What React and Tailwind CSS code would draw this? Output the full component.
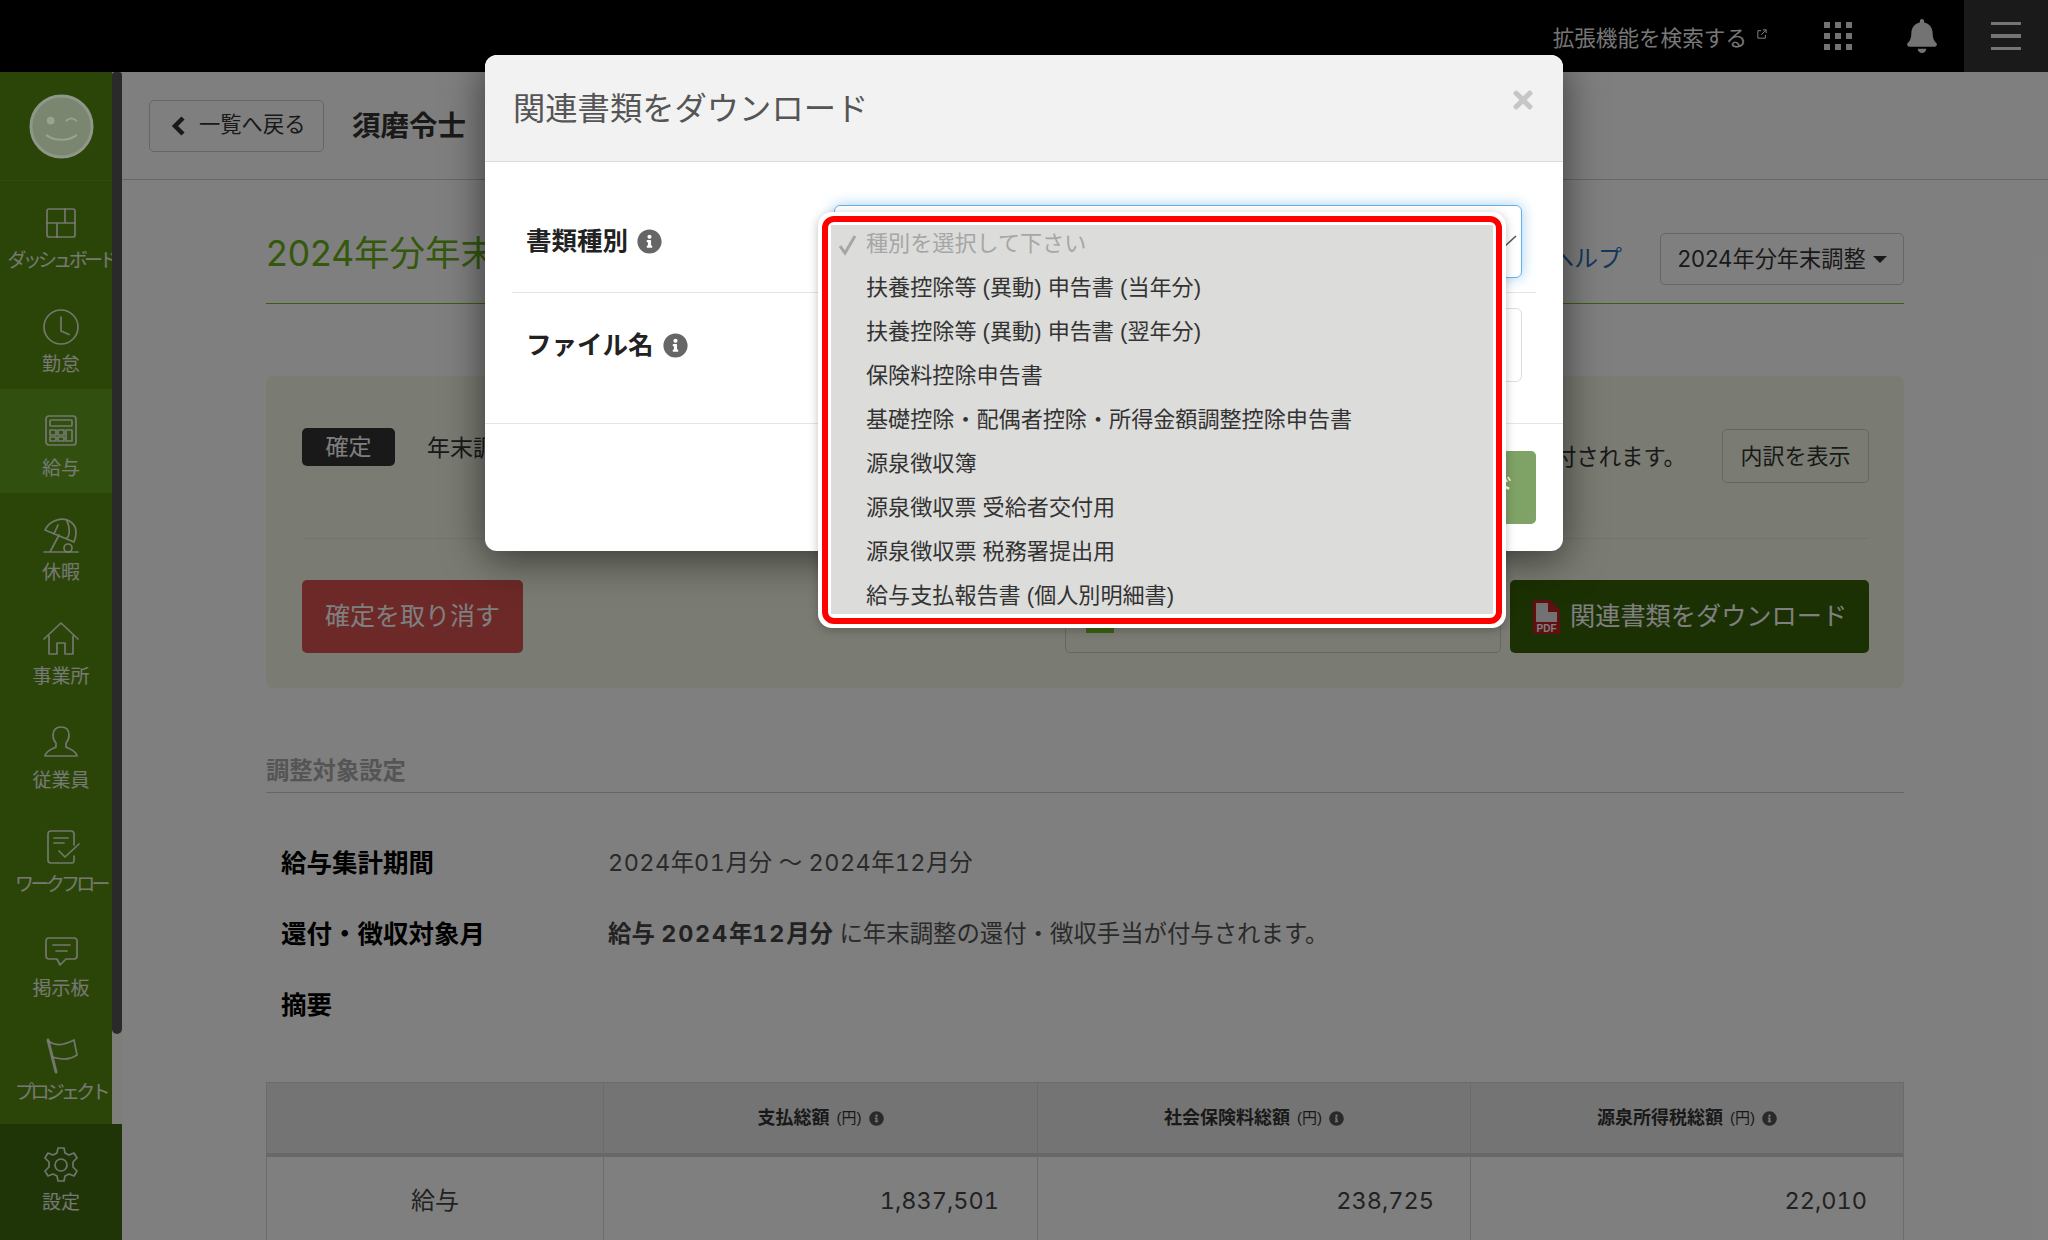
import React from "react";
import { FaInfoCircle, FaBell, FaTimes } from "react-icons/fa";

const S = { fill: "none", stroke: "currentColor", strokeWidth: 1.7, strokeLinecap: "round", strokeLinejoin: "round" };
const Ic = ({ children }) => (
  <svg viewBox="0 0 40 40" className="w-10 h-10 text-white/85" {...S}>{children}</svg>
);
const icons = {
  dash: <Ic><rect x="6" y="6" width="28" height="28" rx="2" /><path d="M6 20h28M24 6v14M16 20v14" /></Ic>,
  clock: <Ic><circle cx="20" cy="20" r="17" /><path d="M20 10v14l8 3.5" /></Ic>,
  calc: <Ic><rect x="5" y="5" width="30" height="29" rx="3" /><rect x="9" y="9" width="22" height="6" rx="1" /><rect x="9" y="19" width="6" height="5" /><rect x="17" y="19" width="6" height="5" /><rect x="25" y="19" width="6" height="11" /><rect x="9" y="26" width="6" height="4" /><rect x="17" y="26" width="6" height="4" /></Ic>,
  beach: <Ic><path d="M3 37h34M9 37 18 20M4 15C8 6 22 0 31 8c5 4 5 12 2 19L4 15ZM17 10l-4 9M26 6c3 6 3 14 0 17" /><circle cx="27" cy="33" r="4" /></Ic>,
  home: <Ic><path d="M3 20 20 4l17 16M8 17v18h8V24h8v11h8V17" /></Ic>,
  user: <Ic><path d="M15 24v-4c-2-2-3-5-3-8 0-5 3-8 8-8s8 3 8 8c0 3-1 6-3 8v4c3 2 10 3 11 9H4c1-6 8-7 11-9Z" /></Ic>,
  flow: <Ic><path d="M33 18V7c0-2-1-3-3-3H10C8 4 7 5 7 7v26c0 2 1 3 3 3h21c2 0 2-1 2-3v-4M13 11h14M13 16h10M18 24l6 6L38 17" /></Ic>,
  board: <Ic><path d="M8 7h25c2 0 3 1 3 3v15c0 2-1 3-3 3H25l-6 6-3-6H8c-2 0-3-1-3-3V10c0-2 1-3 3-3ZM12 14h17M15 20h11" /></Ic>,
  flag: <Ic><path d="M7 5 15 37" strokeWidth="3" /><path d="M7 6c8 5 14 5 26-1l3 15c-9 6-17 4-25 2" /></Ic>,
  gear: <Ic><circle cx="20" cy="20" r="6" /><path d="M17 3h6l1 5 4 2 5-2 3 5-4 4v5l4 4-3 5-5-2-4 2-1 5h-6l-1-5-4-2-5 2-3-5 4-4v-5l-4-4 3-5 5 2 4-2 1-5Z" /></Ic>,
};

const NavItem = ({ icon, label, active, tight }) => (
  <div className={`flex h-[104px] shrink-0 flex-col items-center pl-[10px] pt-[22px] ${active ? "bg-[#63a01e]" : ""}`}>
    {icons[icon]}
    <span className={`mt-2 whitespace-nowrap text-[19px] leading-[19px] text-white/90 ${tight ? "tracking-[-3.7px]" : ""}`}>{label}</span>
  </div>
);

const Caret = () => <span className="inline-block h-0 w-0 border-x-[7px] border-t-[7px] border-x-transparent border-t-[#333]" />;

const Dots = () => (
  <div className="grid grid-cols-3 gap-[5px]">
    {[0, 1, 2, 3, 4, 5, 6, 7, 8].map((i) => <span key={i} className="h-[6px] w-[6px] bg-white/90" />)}
  </div>
);

const Info = ({ cls }) => <FaInfoCircle className={cls} />;

const Plain = ({ children }) => <span className="[font-family:Inter,sans-serif]">{children}</span>;
const Num = ({ children }) => <span className="tabular-nums [font-family:Inter,sans-serif]">{children}</span>;
const Wide = ({ children }) => <span className="tracking-[0.5px] tabular-nums [font-family:Inter,sans-serif]">{children}</span>;
const WideB = ({ children }) => <span className="tracking-[1.8px] tabular-nums [font-family:Inter,sans-serif]">{children}</span>;

const options = [
  "扶養控除等 (異動) 申告書 (当年分)",
  "扶養控除等 (異動) 申告書 (翌年分)",
  "保険料控除申告書",
  "基礎控除・配偶者控除・所得金額調整控除申告書",
  "源泉徴収簿",
  "源泉徴収票 受給者交付用",
  "源泉徴収票 税務署提出用",
  "給与支払報告書 (個人別明細書)",
];

const Th = ({ label, w }) => (
  <div className={`${w} flex items-center justify-center gap-[7px] border-l border-[#d6d6d6] text-[#333]`}>
    <span className="text-[18px] font-bold">{label}</span>
    <span className="text-[15px]">(円)</span>
    <Info cls="h-[15px] w-[15px] text-[#555]" />
  </div>
);

const Td = ({ children, w, pr }) => (
  <div className={`${w} ${pr} border-l border-[#d6d6d6] pt-[29px] text-right text-[23.5px] leading-[30px] text-[#444]`}>
    <Num>{children}</Num>
  </div>
);

export default function App() {
  return (
    <div className="relative h-[1240px] w-[2048px] overflow-hidden bg-white text-[#333] [font-family:'Liberation_Sans','Noto_Sans_CJK_JP',sans-serif]">
      {/* top bar */}
      <header className="flex h-[72px] items-center justify-end bg-black">
        <span className="mt-[6px] text-[21.6px] text-white/95">拡張機能を検索する</span>
        <svg viewBox="0 0 12 12" className="ml-[10px] mt-[-4px] h-[10px] w-[10px] text-white" fill="none" stroke="currentColor" strokeWidth="1.2">
          <path d="M5 2H1v9h9V7M7 1h4v4M11 1 5 7" />
        </svg>
        <div className="ml-[57px]"><Dots /></div>
        <FaBell className="ml-[55px] h-[34px] w-[30px] text-white/90" />
        <div className="ml-[27px] flex h-[72px] w-[84px] flex-col items-center justify-center gap-[9px] bg-[#343434]">
          <span className="h-[3.5px] w-[30px] bg-white/90" />
          <span className="h-[3.5px] w-[30px] bg-white/90" />
          <span className="h-[3.5px] w-[30px] bg-white/90" />
        </div>
      </header>

      <div className="flex h-[1168px]">
        {/* sidebar */}
        <aside className="flex w-[122px] shrink-0 flex-col">
          <div className="flex h-[1052px] overflow-hidden">
            <nav className="flex w-[112px] shrink-0 flex-col overflow-hidden bg-[#56890f]">
              <div className="flex h-[109px] shrink-0 items-center justify-center border-b border-[#60961a] pl-[10px]">
                <svg viewBox="0 0 66 66" className="relative z-10 h-[65px] w-[65px]">
                  <circle cx="33" cy="33" r="31" fill="#7a8670" stroke="#8f978a" strokeWidth="3" />
                  <circle cx="22" cy="27" r="4" fill="#9aa292" />
                  <path d="M38 27c3-3 7-3 10 0M18 42c8 6 22 6 30 0" fill="none" stroke="#9aa292" strokeWidth="2" strokeLinecap="round" />
                </svg>
              </div>
              <NavItem icon="dash" label="ダッシュボード" tight />
              <NavItem icon="clock" label="勤怠" />
              <NavItem icon="calc" label="給与" active />
              <NavItem icon="beach" label="休暇" />
              <NavItem icon="home" label="事業所" />
              <NavItem icon="user" label="従業員" />
              <NavItem icon="flow" label="ワークフロー" tight />
              <NavItem icon="board" label="掲示板" />
              <NavItem icon="flag" label="プロジェクト" tight />
            </nav>
            <div className="flex w-[10px] flex-col bg-[#fafaf4]">
              <div className="h-[962px] rounded-b-md rounded-t-sm bg-[#555]" />
            </div>
          </div>
          <div className="flex h-[116px] flex-col items-center bg-[#3e6a0e] pt-[21px]">
            {icons.gear}
            <span className="mt-2 text-[19px] leading-[19px] text-white/90">設定</span>
          </div>
        </aside>

        {/* main */}
        <main className="min-w-0 flex-1">
          <div className="flex h-[108px] items-center gap-7 border-b border-[#ccc] pl-[27px]">
            <button className="flex h-[52px] w-[175px] items-center gap-2 rounded-[5px] border border-[#ccc] pl-[21px] text-[21.3px]">
              <svg viewBox="0 0 14 20" className="h-[20px] w-[14px] text-[#333]" fill="none" stroke="currentColor" strokeWidth="4.5" strokeLinejoin="miter">
                <path d="M12 2 4 10l8 8" />
              </svg>
              <span className="ml-[6px]">一覧へ戻る</span>
            </button>
            <span className="mt-[2px] text-[28.5px] font-bold">須磨令士</span>
          </div>

          <div className="ml-[144px] w-[1638px]">
            <div className="flex h-[124px] items-end border-b border-[#7ab82a] pb-[18px]">
              <h1 className="mb-[9px] flex-1 text-[35.5px] leading-[44px] text-[#68b018]"><Plain>2024</Plain>年分年末調整</h1>
              <a className="mb-[8px] mr-[38px] text-[24px] text-[#2a6fb8]">ヘルプ</a>
              <button className="flex h-[52px] w-[244px] items-center justify-center gap-[7px] rounded-[5px] border border-[#ccc] text-[22.2px] text-[#333]">
                <span><Plain>2024</Plain>年分年末調整</span>
                <Caret />
              </button>
            </div>

            <section className="mt-[72px] h-[312px] rounded-lg bg-[#f4f6e5] pl-9 pr-[35px]">
              <div className="flex h-[163px] border-b border-[#e6e8d8]">
                <span className="mt-[52px] flex h-[38px] w-[93px] items-center justify-center rounded-[5px] bg-[#333] text-[23px] text-white">確定</span>
                <span className="ml-8 mt-[55px] flex-1 text-[23px]">年末調整が確定</span>
                <span className="mr-[36px] mt-[65px] text-[22.4px]">付されます。</span>
                <button className="mt-[53px] h-[54px] w-[147px] rounded-[5px] border border-[#ccc] text-[22px]">内訳を表示</button>
              </div>
              <div className="mt-[41px] flex">
                <button className="h-[73px] w-[221px] rounded-[5px] bg-[#d9534f] text-[25px] text-white">確定を取り消す</button>
                <div className="ml-auto flex gap-[9px]">
                  <div className="flex h-[73px] w-[436px] items-center rounded-[5px] border border-[#ccc] pl-[20px]">
                    <span className="h-[32px] w-[28px] bg-[#74c51f]" />
                  </div>
                  <button className="flex h-[73px] w-[359px] items-center gap-[10px] rounded-[5px] bg-[#366006] pl-[23px] text-[25.2px] text-white">
                    <svg viewBox="0 0 27 34" className="h-[34px] w-[27px]">
                      <path d="M0 0h17l10 10v24H0Z" fill="#c02020" />
                      <path d="M3 3h12v9h9v10H3Z" fill="#e5e5e5" />
                      <text x="13.5" y="32" textAnchor="middle" fontSize="10" fontWeight="700" fill="#fff" fontFamily="Liberation Sans">PDF</text>
                    </svg>
                    関連書類をダウンロード
                  </button>
                </div>
              </div>
            </section>

            <h2 className="mt-[66px] h-[39px] border-b border-[#ccc] text-[23.3px] font-bold leading-[34px] text-[#aaa]">調整対象設定</h2>

            <dl className="mt-[35px] pl-[15px] text-[23.4px] text-[#555]">
              <div className="flex h-[71px] items-center">
                <dt className="w-[327px] text-[25.5px] font-bold text-black">給与集計期間</dt>
                <dd><Wide>2024</Wide>年<Wide>01</Wide>月分 ～ <Wide>2024</Wide>年<Wide>12</Wide>月分</dd>
              </div>
              <div className="flex h-[71px] items-center">
                <dt className="w-[327px] text-[25.5px] font-bold text-black">還付・徴収対象月</dt>
                <dd><b className="text-[#444]">給与 <WideB>2024</WideB>年<WideB>12</WideB>月分</b> に年末調整の還付・徴収手当が付与されます。</dd>
              </div>
              <div className="flex h-[71px] items-center">
                <dt className="w-[327px] text-[25.5px] font-bold text-black">摘要</dt>
              </div>
            </dl>

            <div className="mt-[41px] border-r border-[#d6d6d6]">
              <div className="flex h-[75px] border-y border-b-[4px] border-y-[#d6d6d6] border-b-[#d0d0d0] bg-[#e8e8e8]">
                <div className="w-[337px] border-l border-[#d6d6d6]" />
                <Th label="支払総額" w="w-[434px]" />
                <Th label="社会保険料総額" w="w-[433px]" />
                <Th label="源泉所得税総額" w="w-[433px]" />
              </div>
              <div className="flex h-[91px]">
                <div className="w-[337px] border-l border-[#d6d6d6] pt-[29px] text-center text-[24px] leading-[30px] text-[#444]">給与</div>
                <Td w="w-[434px]" pr="pr-[38px]">1,837,501</Td>
                <Td w="w-[433px]" pr="pr-[36px]">238,725</Td>
                <Td w="w-[433px]" pr="pr-[36px]">22,010</Td>
              </div>
            </div>
          </div>
        </main>
      </div>

      {/* backdrop */}
      <div className="absolute inset-0 bg-black/50" />

      {/* modal */}
      <div className="absolute left-[485px] top-[55px] h-[496px] w-[1078px] rounded-xl bg-white shadow-[0_8px_40px_rgba(0,0,0,0.55)]">
        <div className="flex h-[107px] items-center justify-between rounded-t-xl border-b border-[#ddd] bg-[#f2f2f2] pl-[28px] pr-[28px]">
          <h3 className="mt-[2px] text-[32.3px] text-[#555]">関連書類をダウンロード</h3>
          <FaTimes className="mb-[16px] h-[28px] w-[24px] text-[#c6c6c6]" />
        </div>
        <div className="mx-[27px] flex h-[131px] border-b border-[#e5e5e5] pl-[14px] pr-[14px] pt-[43px]">
          <div className="flex h-[72px] w-[308px] items-start gap-[9px]">
            <span className="mt-[18px] text-[25.5px] font-bold leading-[37px] text-[#222]">書類種別</span>
            <Info cls="mt-[24px] h-[25px] w-[25px] text-[#666]" />
          </div>
          <div className="flex h-[73px] flex-1 items-center justify-end rounded-md border border-[#66afe9] pb-[2px] pr-[4px] shadow-[0_0_14px_rgba(102,175,233,0.6)]">
            <svg viewBox="0 0 24 12" className="h-[12px] w-[24px] text-[#555]" fill="none" stroke="currentColor" strokeWidth="1.6">
              <path d="M2 1l10 10L23 1" />
            </svg>
          </div>
        </div>
        <div className="mx-[27px] flex h-[130px] pl-[14px] pr-[14px] pt-[15px]">
          <div className="flex h-[72px] w-[308px] items-start gap-[9px]">
            <span className="mt-[19px] text-[25.5px] font-bold leading-[37px] text-[#222]">ファイル名</span>
            <Info cls="mt-[25px] h-[25px] w-[25px] text-[#666]" />
          </div>
          <div className="h-[74px] flex-1 rounded-md border border-[#ddd]" />
        </div>
        <div className="flex h-[128px] justify-end border-t border-[#e5e5e5] pr-[27px] pt-[27px]">
          <div className="flex h-[73px] w-[200px] items-center justify-end rounded-[5px] bg-[#7fa266] pr-[22px] text-[25px] text-white">ダウンロード</div>
        </div>

        {/* open select menu with red highlight */}
        <div className="absolute left-[333px] top-[157px] h-[416px] w-[688px] rounded-[14px] bg-white p-[4px] shadow-[0_2px_10px_rgba(0,0,0,0.25)]">
          <div className="h-full rounded-[12px] border-[6px] border-[#ff0000] bg-white p-[3px]">
            <ul className="h-[389px] overflow-hidden bg-[#dcdcda] text-[22.1px] text-[#333]">
              <li className="flex h-[41px] items-center pb-[4px] pl-[7px] text-[#a6a6a6]">
                <svg viewBox="0 0 20 22" className="mt-[3px] h-[22px] w-[20px]" fill="none" stroke="currentColor" strokeWidth="3">
                  <path d="M2 12l5 7L17 2" />
                </svg>
                <span className="ml-[8px]">種別を選択して下さい</span>
              </li>
              {options.map((o) => (
                <li key={o} className="flex h-[44px] items-center pl-[35px]">{o}</li>
              ))}
            </ul>
          </div>
        </div>
      </div>
    </div>
  );
}
